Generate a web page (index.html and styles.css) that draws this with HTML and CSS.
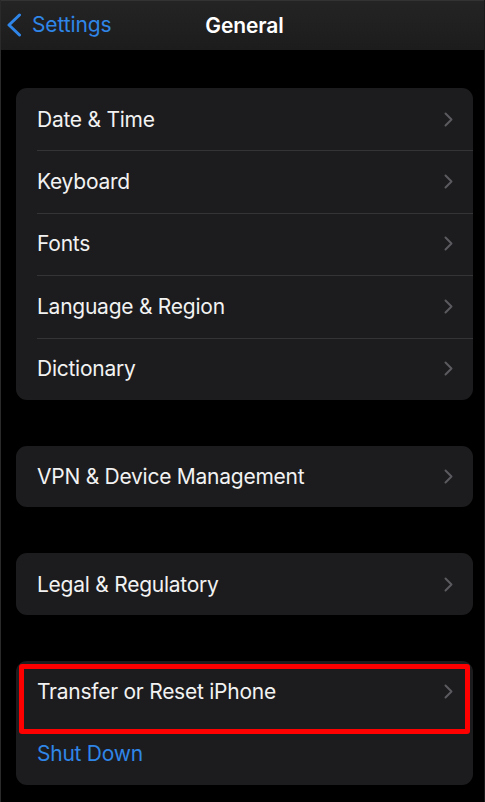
FILE: index.html
```html
<!DOCTYPE html>
<html lang="en">
<head>
<meta charset="utf-8">
<title>General</title>
<link rel="stylesheet" href="styles.css">
</head>
<body>
<div class="screen">
  <header class="nav">
    <a class="back">
      <svg class="back-icon" viewBox="0 0 16 24" width="16" height="24"><path d="M13.5 2 L3 12 L13.5 22" fill="none" stroke="#2f86e8" stroke-width="3" stroke-linecap="round" stroke-linejoin="round"/></svg>
      <span>Settings</span>
    </a>
    <h1 class="title">General</h1>
  </header>

  <main class="content">
    <section class="group">
      <div class="row"><span class="label">Date &amp; Time</span><svg class="chev" viewBox="0 0 9 15" width="9" height="15"><path d="M1.5 1.5 L7.5 7.5 L1.5 13.5" fill="none" stroke="#5b5b5f" stroke-width="2" stroke-linecap="round" stroke-linejoin="round"/></svg></div>
      <div class="row"><span class="label">Keyboard</span><svg class="chev" viewBox="0 0 9 15" width="9" height="15"><path d="M1.5 1.5 L7.5 7.5 L1.5 13.5" fill="none" stroke="#5b5b5f" stroke-width="2" stroke-linecap="round" stroke-linejoin="round"/></svg></div>
      <div class="row"><span class="label">Fonts</span><svg class="chev" viewBox="0 0 9 15" width="9" height="15"><path d="M1.5 1.5 L7.5 7.5 L1.5 13.5" fill="none" stroke="#5b5b5f" stroke-width="2" stroke-linecap="round" stroke-linejoin="round"/></svg></div>
      <div class="row"><span class="label">Language &amp; Region</span><svg class="chev" viewBox="0 0 9 15" width="9" height="15"><path d="M1.5 1.5 L7.5 7.5 L1.5 13.5" fill="none" stroke="#5b5b5f" stroke-width="2" stroke-linecap="round" stroke-linejoin="round"/></svg></div>
      <div class="row"><span class="label">Dictionary</span><svg class="chev" viewBox="0 0 9 15" width="9" height="15"><path d="M1.5 1.5 L7.5 7.5 L1.5 13.5" fill="none" stroke="#5b5b5f" stroke-width="2" stroke-linecap="round" stroke-linejoin="round"/></svg></div>
    </section>

    <section class="group">
      <div class="row single"><span class="label">VPN &amp; Device Management</span><svg class="chev" viewBox="0 0 9 15" width="9" height="15"><path d="M1.5 1.5 L7.5 7.5 L1.5 13.5" fill="none" stroke="#5b5b5f" stroke-width="2" stroke-linecap="round" stroke-linejoin="round"/></svg></div>
    </section>

    <section class="group">
      <div class="row single"><span class="label">Legal &amp; Regulatory</span><svg class="chev" viewBox="0 0 9 15" width="9" height="15"><path d="M1.5 1.5 L7.5 7.5 L1.5 13.5" fill="none" stroke="#5b5b5f" stroke-width="2" stroke-linecap="round" stroke-linejoin="round"/></svg></div>
    </section>

    <section class="group">
      <div class="row highlighted"><span class="label">Transfer or Reset iPhone</span><svg class="chev" viewBox="0 0 9 15" width="9" height="15"><path d="M1.5 1.5 L7.5 7.5 L1.5 13.5" fill="none" stroke="#5b5b5f" stroke-width="2" stroke-linecap="round" stroke-linejoin="round"/></svg></div>
      <div class="row"><span class="label action">Shut Down</span></div>
    </section>
  </main>
</div>
</body>
</html>
```

FILE: styles.css
```css
* { box-sizing: border-box; }

html, body {
  margin: 0;
  padding: 0;
  background: #000;
}

body {
  font-family: Inter, "Noto Sans", "Liberation Sans", sans-serif;
  color: #fff;
  -webkit-font-smoothing: antialiased;
}

.screen {
  width: 485px;
  height: 802px;
  overflow: hidden;
  background: #000;
  border-left: 1px solid #2a2a2a;
  border-right: 1px solid #1a1a1a;
}

.nav {
  position: relative;
  height: 50px;
  background: linear-gradient(#242424, #1c1c1c);
  border-top: 1px solid #333;
  display: flex;
  align-items: center;
  justify-content: center;
}

.back {
  position: absolute;
  left: 5px;
  top: 11px;
  display: flex;
  align-items: center;
  gap: 10px;
  color: #2f86e8;
  font-size: 21px;
  letter-spacing: -0.1px;
}

.back-icon { display: block; }

.title {
  margin: 0;
  font-size: 21px;
  font-weight: 600;
  letter-spacing: -0.1px;
  color: #fff;
  transform: translateX(2px);
}

.content {
  padding: 38px 11px 0 15px;
  display: flex;
  flex-direction: column;
  gap: 46px;
}

.group {
  background: #1c1c1e;
  border-radius: 11px;
}

.row {
  position: relative;
  height: 62.4px;
  display: flex;
  align-items: center;
  justify-content: space-between;
  padding: 0 20px 0 21px;
}

.row.single { height: 61.5px; }

.row + .row::before {
  content: "";
  position: absolute;
  top: 0;
  left: 21px;
  right: 0;
  height: 1px;
  background: #343436;
}

.label {
  font-size: 21px;
  color: #f2f2f2;
  letter-spacing: -0.25px;
}

.label.action { color: #2f86e8; }

.chev { display: block; }

.highlighted { height: 62px; }

.highlighted::after {
  content: "";
  position: absolute;
  left: 3px;
  right: 3px;
  top: 3px;
  height: 60px;
  border: 5px solid #f00;
  border-radius: 3px;
}

.highlighted + .row { height: 62px; }
.highlighted + .row::before { display: none; }
```
